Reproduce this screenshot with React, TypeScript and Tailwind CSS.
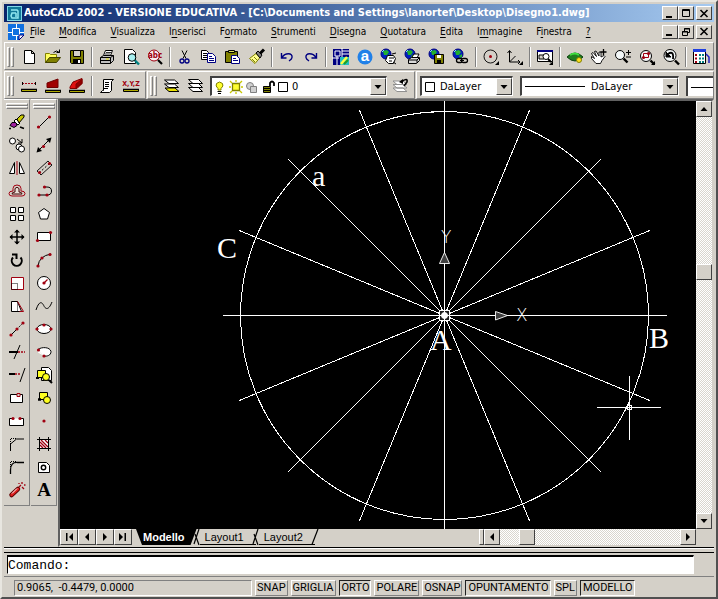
import React from "react";

type Icon = { name: string; art: React.ReactNode };

const RAISED =
  "flex shrink-0 items-center justify-center border border-t-white border-l-white border-r-[#404040] border-b-[#404040] bg-[#d4d0c8]";
const DITHER = "bg-[repeating-conic-gradient(#ffffff_0_25%,#d9d6ce_0_50%)] bg-[length:2px_2px]";
const UI = "font-['DejaVu_Sans_Condensed','DejaVu_Sans',sans-serif]";

const K = "#000";
const RED = "#a00010";
const NAVY = "#000080";
const OLIVE = "#808000";

function Svg({ children }: { children: React.ReactNode }) {
  return (
    <svg width="18" height="18" viewBox="0 0 18 18" fill="none" stroke={K} className="overflow-visible" aria-hidden="true">
      {children}
    </svg>
  );
}

const Corner = () => <path d="M17 13v4h-4z" fill={K} stroke="none" />;

const Globe = () => (
  <>
    <circle cx="6" cy="6" r="5" fill="#0020c0" stroke={NAVY} />
    <path d="M3 3l4-1 2 2-2 3H4zM7 8l3-2v3l-2 1z" fill="#20b030" stroke="none" />
    <path d="M2 4l2-2" stroke="#80e0ff" />
  </>
);

const Lens = ({ x = 7, y = 7, r = 5 }: { x?: number; y?: number; r?: number }) => (
  <>
    <circle cx={x} cy={y} r={r} fill="#f4f8f8" />
    <path d={`M${x + r - 1} ${y + r - 1}l4 4`} strokeWidth="2.4" />
  </>
);

const Dot = ({ x, y }: { x: number; y: number }) => (
  <circle cx={x} cy={y} r="1.6" fill={RED} stroke="none" />
);

const standardGroups: Icon[][] = [
  [
    { name: "Nuovo", art: <path d="M4.500 2.500h7l3 3v10h-10zM11.500 2.500v3h3" fill="#fff" /> },
    {
      name: "Apri",
      art: (
        <>
          <path d="M1.500 14.500v-9h4l1 1h6v3h-6z" fill="#ffff60" stroke={OLIVE} />
          <path d="M1.500 14.500l4-5h11l-4 5z" fill={OLIVE} stroke="#404000" />
          <path d="M9.500 4.500q3-3 6 0m0-3v3h-3" />
        </>
      ),
    },
    {
      name: "Salva",
      art: (
        <>
          <path d="M2.500 2.500h13v13h-12l-1-1z" fill={OLIVE} />
          <path d="M5.500 2.500h7v6h-7z" fill="#d4d0c8" />
          <path d="M5 11h8v5H5z" fill={K} stroke="none" />
          <path d="M10 12h2v3h-2z" fill="#fff" stroke="none" />
        </>
      ),
    },
  ],
  [
    {
      name: "Stampa",
      art: (
        <>
          <path d="M5.500 7.500l2-5h7l-2 5" fill="#fff" />
          <path d="M8 4.500h5M7 6h5" strokeWidth=".8" />
          <path d="M2.500 9.500l3-2h10v5l-3 3h-10z" fill="#c0c0c0" />
          <path d="M2.500 9.500h10v6M12.500 9.500l3-2M3 12.500h9" />
          <path d="M8 11h3" stroke="#e0e000" />
        </>
      ),
    },
    {
      name: "Anteprima di stampa",
      art: (
        <>
          <path d="M2.500 1.500h8l3 3v11h-11z" fill="#fff" />
          <circle cx="10" cy="9.500" r="3.800" fill="#a8f0f0" />
          <path d="M13 12.500l4 4" stroke="#008080" strokeWidth="2.400" />
        </>
      ),
    },
    {
      name: "Trova",
      art: (
        <>
          <circle cx="8" cy="7.500" r="5.500" fill="#f8f0f0" stroke={RED} />
          <path d="M12 12l4 4" stroke={K} strokeWidth="2.200" />
          <text x="2" y="10" fontSize="8" fontWeight="bold" fill={RED} stroke="none" fontFamily="DejaVu Sans Condensed">
            abc
          </text>
        </>
      ),
    },
  ],
  [
    {
      name: "Taglia",
      art: (
        <>
          <path d="M6 2.500l4 8M11 2.500l-4 8" />
          <circle cx="6" cy="13" r="2" stroke={NAVY} strokeWidth="1.300" />
          <circle cx="11" cy="13" r="2" stroke={NAVY} strokeWidth="1.300" />
        </>
      ),
    },
    {
      name: "Copia",
      art: (
        <>
          <path d="M1.500 2.500h5l2 2v7h-7z" fill="#fff" />
          <path d="M3 5.500h4M3 7.500h4M3 9.500h4" />
          <path d="M7.500 5.500h5l3 3v6h-8z" fill="#fff" stroke={NAVY} />
          <path d="M9 8.500h3M9 10.500h5M9 12.500h5" stroke={NAVY} />
        </>
      ),
    },
    {
      name: "Incolla",
      art: (
        <>
          <path d="M1.500 3.500h12v11h-12z" fill={OLIVE} />
          <path d="M4.500 2.500h6v2h-6z" fill="#e0e060" />
          <path d="M7.500 7.500h5l3 3v5h-8z" fill="#fff" stroke={NAVY} />
          <path d="M9 10.500h3M9 12.500h5" stroke={NAVY} />
        </>
      ),
    },
    {
      name: "Corrispondenza proprietà",
      art: (
        <>
          <path d="M1.500 10.500L8 5.500l4 4-5 6z" fill="#ffff90" stroke={OLIVE} />
          <path d="M4 11l3 3M6 9l3 3" stroke={OLIVE} />
          <path d="M8 5l2-2 4 4-2 3z" fill="#808080" />
          <path d="M12 5.500l4-4" strokeWidth="3" />
        </>
      ),
    },
  ],
  [
    {
      name: "Annulla",
      art: <path d="M3.500 5v5h5M4 9.500C7 4.500 15 4.500 14 9.500c0 1.500-1.500 2.500-3 3.500" stroke={NAVY} strokeWidth="1.400" />,
    },
    {
      name: "Ripristina",
      art: <path d="M14.500 5v5h-5M14 9.500C11 4.500 3 4.500 4 9.500c0 1.500 1.500 2.500 3 3.500" stroke={NAVY} strokeWidth="1.400" />,
    },
  ],
  [
    {
      name: "AutoCAD Oggi",
      art: (
        <>
          <path d="M1 1h16v16H1z" fill={NAVY} stroke="none" />
          <path d="M3 3h5v5H3zM0 10h7M10 3h7M10 6h7M10 0v10M5 8v9" stroke="#fff" />
          <path d="M8 9h9v8H8z" fill="#20c0c0" stroke="none" />
          <path d="M9 16l6-7" stroke="#ffff40" strokeWidth="2.500" />
          <path d="M12 16l4-4" stroke="#20a020" strokeWidth="2" />
        </>
      ),
    },
    {
      name: "Autodesk Point A",
      art: (
        <>
          <circle cx="9" cy="9" r="7.500" fill="#2080e8" stroke="none" />
          <text x="9" y="13" textAnchor="middle" fontSize="15" fontWeight="bold" fill="#fff" stroke="none" fontFamily="Liberation Sans">
            a
          </text>
        </>
      ),
    },
    {
      name: "Incontro",
      art: (
        <>
          <Globe />
          <path d="M7.500 7.500h6l2 3-2 5h-5l-3-3z" fill="#fff" />
          <path d="M9 10h5M13 14l3 2M12 6l4-1M9 13h3" />
        </>
      ),
    },
    {
      name: "Pubblica sul Web",
      art: (
        <>
          <Globe />
          <path d="M8 9l2-3h5l-2 4" fill="#fff" />
          <path d="M4.500 11.500l3-2h8v3l-3 3h-8z" fill="#d8d8d8" />
          <path d="M5 12h8v3M13 12l2-2" />
        </>
      ),
    },
    {
      name: "eTransmit",
      art: (
        <>
          <Globe />
          <path d="M6.500 6.500h9v9h-9z" fill={OLIVE} />
          <path d="M9 7h4v3H9z" fill="#fff" stroke="none" />
          <path d="M9 12h4v3H9z" fill={K} stroke="none" />
        </>
      ),
    },
    {
      name: "Collegamento ipertestuale",
      art: (
        <>
          <Globe />
          <rect x="4.500" y="10.500" width="6" height="4" rx="2" fill="#d4d0c8" strokeWidth="1.300" />
          <rect x="9.500" y="10.500" width="6" height="4" rx="2" fill="#d4d0c8" strokeWidth="1.300" />
          <path d="M8 12.500h4" />
        </>
      ),
    },
  ],
  [
    {
      name: "Snap a oggetto",
      art: (
        <>
          <circle cx="8.500" cy="8.500" r="6.500" strokeWidth=".9" />
          <circle cx="8.500" cy="8.500" r="1.500" fill={RED} stroke="none" />
          <Corner />
        </>
      ),
    },
    {
      name: "UCS",
      art: (
        <>
          <path d="M3.500 3v11H14M3.500 14l6-6M1.500 5l2-2.500 2 2.500M12 12l2 2-2 2" />
          <Corner />
        </>
      ),
    },
  ],
  [
    {
      name: "Viste",
      art: (
        <>
          <path d="M1.500 2.500h15v11h-15z" fill="#fff" />
          <path d="M1 2h16v2H1z" fill={NAVY} stroke="none" />
          <path d="M3 7h5v4H3z" fill="#d4d0c8" />
          <circle cx="10" cy="8.500" r="3" fill="#fff" />
          <path d="M12 11l3 3" strokeWidth="2" />
          <Corner />
        </>
      ),
    },
  ],
  [
    {
      name: "Orbita 3D",
      art: (
        <>
          <path d="M1 9q8-8 16 0-8 8-16 0z" fill="#208020" stroke="#104010" />
          <path d="M4 7q5-3 9 0" stroke="#40e040" strokeWidth="2" />
          <circle cx="13" cy="12" r="2.500" fill="#ffe020" stroke={OLIVE} />
        </>
      ),
    },
    {
      name: "Pan in tempo reale",
      art: (
        <>
          <path
            d="M1.500 8.500l3 2-3-5 1.500-1 3.500 4-2-5L6 3l3 5 0-4 2 0v5l3-1.500 1 1-3 4-1.500 3H6l-4.500-5z"
            fill="#fff"
            strokeWidth=".9"
          />
          <path d="M13.500 1v6M10.500 4h6" strokeWidth="1.300" />
        </>
      ),
    },
    {
      name: "Zoom in tempo reale",
      art: (
        <>
          <Lens x={6} y={7} r={4.5} />
          <path d="M14.500 2v5M12 4.500h5M12 9h5" />
        </>
      ),
    },
    {
      name: "Zoom finestra",
      art: (
        <>
          <Lens x={8} y={8} r={5.5} />
          <path d="M5.500 5.500h5v4h-5z" stroke={RED} />
          <Dot x={5.5} y={9.5} />
          <Dot x={10.5} y={5.5} />
          <Corner />
        </>
      ),
    },
    {
      name: "Zoom precedente",
      art: (
        <>
          <Lens x={8} y={7.5} r={6} />
          <path d="M4 9l0-5 5 5z" fill={K} />
          <path d="M6 6q6-4 5 5" strokeWidth="1.800" />
        </>
      ),
    },
  ],
  [
    {
      name: "Proprietà",
      art: (
        <>
          <path d="M1.500 1.500h12v14h-12z" fill="#fff" />
          <path d="M1 1h13v3H1z" fill="#2040e0" stroke="none" />
          <path d="M4 6v2M4 9.500v2M4 13v2" stroke={RED} strokeWidth="2" />
          <path d="M8 6v2M8 9.500v2M8 13v2M11 6v2M11 9.500v2M11 13v2" stroke="#008080" strokeWidth="2" />
          <path d="M14 6l3 3v6" stroke="#2020c0" strokeWidth="1.500" />
        </>
      ),
    },
  ],
];

const inquiryGroups: Icon[][] = [
  [
    {
      name: "Distanza",
      art: (
        <>
          <path d="M2 6.500h14" stroke={RED} strokeDasharray="2 1" />
          <path d="M2.500 5v3M15.500 5v3" />
          <path d="M1.500 12.500h15v2h-15z" fill="#e8e000" />
          <path d="M1 12.500h16" strokeWidth="1.500" />
        </>
      ),
    },
    {
      name: "Area",
      art: (
        <>
          <path d="M3 10.500V6l11-4v8.500z" fill="#a00000" stroke="#700000" />
          <path d="M1.500 13.500h15v2h-15z" fill="#e8e000" />
          <path d="M1 13.500h16" strokeWidth="1.500" />
        </>
      ),
    },
    {
      name: "Proprietà di massa",
      art: (
        <>
          <path d="M2 10l3-5 9-3.500v5l-5 5H2z" fill="#e01010" stroke="#800000" />
          <path d="M8 7l6-5v4.500l-6 4.500z" fill="#900000" stroke="#800000" />
          <path d="M1.500 13.500h15v2h-15z" fill="#e8e000" />
          <path d="M1 13.500h16" strokeWidth="1.500" />
        </>
      ),
    },
  ],
  [
    {
      name: "Lista",
      art: (
        <>
          <path d="M5.500 2.500h10l-2 2v9l-2 2h-9l2-2h1z" fill="#fff" />
          <path d="M7 5.500h4M7 7.500h4M7 9.500h4M6 11.500h4" />
        </>
      ),
    },
    {
      name: "Individua punto",
      art: (
        <>
          <text x="9" y="9" textAnchor="middle" fontSize="7" fontWeight="bold" fill={RED} stroke="none" fontFamily="DejaVu Sans Condensed">
            X,Y,Z
          </text>
          <path d="M1.500 12.500h15v2h-15z" fill="#e8e000" />
          <path d="M1 12.500h16" strokeWidth="1.500" />
        </>
      ),
    },
  ],
];

const layerIcons: Icon[] = [
  {
    name: "Layer dell'oggetto corrente",
    art: (
      <>
        <path d="M2 11h10l4 3.500H6z" fill="#e8e000" />
        <path d="M1.500 7h10l4 3.500H6z" fill="#fff" />
        <path d="M1.500 3h10l4 3.500H6z" fill="#fff" />
      </>
    ),
  },
  {
    name: "Layer",
    art: (
      <>
        <path d="M1.500 10.500h10l4 4H6z" fill="#fff" />
        <path d="M1.500 6.500h10l4 4H6z" fill="#fff" />
        <path d="M1.500 2.500h10l4 4H6z" fill="#fff" />
      </>
    ),
  },
];

const modifyTools: Icon[] = [
  {
    name: "Cancella",
    art: (
      <>
        <path d="M4 9.500h4l1 3-3 2-4-2z" fill="#a020a0" />
        <path d="M6 8l4 4 2-2-4-4z" fill="#fff" />
        <path d="M9 6l4-4h3v2l-5 6z" fill="#c8c800" />
        <path d="M1 15.500h2M12 14l4 1.500" strokeWidth="1.600" />
      </>
    ),
  },
  {
    name: "Copia oggetto",
    art: (
      <>
        <circle cx="4.500" cy="5" r="3" fill="#fff" />
        <circle cx="11" cy="11" r="3" fill="#fff" />
        <circle cx="13.500" cy="13" r="3" fill="#fff" />
        <path d="M9 3l5 4m0-4v4h-4" />
      </>
    ),
  },
  {
    name: "Specchio",
    art: (
      <>
        <path d="M6.500 3.500v11h-5z" fill="#fff" />
        <path d="M11.500 3.500v11h5z" fill="#fff" />
        <path d="M9 2v14" stroke={RED} />
      </>
    ),
  },
  {
    name: "Offset",
    art: (
      <>
        <path d="M5 9V6.500q0-3.500 4-3.500t4 3.500V9q4 0 4 2.500T14 14H4q-3 0-3-2.500T5 9z" stroke={RED} />
        <path d="M7 10V6.500q2-2.500 4 0V10q3 0 3 2H4q0-2 3-2z" stroke="#400000" fill="#e8e0d8" />
      </>
    ),
  },
  {
    name: "Serie",
    art: <path d="M2.500 2.500h5v5h-5zM10.500 2.500h5v5h-5zM2.500 10.500h5v5h-5zM10.500 10.500h5v5h-5z" fill="#fff" />,
  },
  {
    name: "Sposta",
    art: (
      <>
        <path d="M9 2v14M2 9h14" strokeWidth="1.500" />
        <path d="M6 4.500l3-3 3 3zM6 13.500l3 3 3-3zM4.500 6l-3 3 3 3zM13.500 6l3 3-3 3z" fill={K} stroke="none" />
      </>
    ),
  },
  {
    name: "Ruota",
    art: <path d="M5 6.500a5 5 0 1 0 7.500 0M4 3.500h4.500V8" strokeWidth="2" />,
  },
  {
    name: "Scala",
    art: (
      <>
        <path d="M3.500 3.500h12v12h-12z" fill="#fff" stroke={RED} />
        <path d="M3.500 9.500h6v6h-6z" strokeDasharray="1 1" />
      </>
    ),
  },
  {
    name: "Stira",
    art: (
      <>
        <path d="M3.500 4.500h6l4 10h-10z" fill="#fff" />
        <path d="M9.500 4.500v10" strokeDasharray="1 1" />
        <path d="M9.500 4.500l6 10h-4" stroke={RED} />
      </>
    ),
  },
  {
    name: "Allunga",
    art: (
      <>
        <path d="M3 15L9 9" />
        <path d="M9 9l6-6" strokeDasharray="1.500 1" />
        <Dot x={3} y={15} />
        <Dot x={9} y={9} />
        <Dot x={15} y={3} />
      </>
    ),
  },
  {
    name: "Taglia oggetto",
    art: (
      <>
        <path d="M12 2L6 16" />
        <path d="M1 9h9" strokeWidth="2" />
        <path d="M10 9h7" stroke={RED} strokeDasharray="2 1" strokeWidth="1.500" />
      </>
    ),
  },
  {
    name: "Estendi",
    art: (
      <>
        <path d="M17 2l-5 14" />
        <path d="M1 8h6" strokeWidth="2" />
        <path d="M7 8h6" stroke={RED} strokeDasharray="2 1" strokeWidth="1.500" />
      </>
    ),
  },
  {
    name: "Spezza nel punto",
    art: (
      <>
        <path d="M2.500 5.500h12v8h-12z" fill="#fff" />
        <path d="M9 4.500h3v3H9z" fill="#d4d0c8" stroke={RED} />
      </>
    ),
  },
  {
    name: "Spezza",
    art: (
      <>
        <path d="M5 6.500H1.500v7h14v-7H12" fill="#fff" />
        <Dot x={5} y={6.5} />
        <Dot x={12} y={6.5} />
      </>
    ),
  },
  {
    name: "Cima",
    art: (
      <>
        <path d="M2.500 16V9l6-5H16" />
        <path d="M2.500 9V3.500h6" strokeDasharray="1 1" />
      </>
    ),
  },
  {
    name: "Raccorda",
    art: (
      <>
        <path d="M2.500 16v-4q0-8 7-7.500H16" strokeWidth="1.300" />
        <path d="M2.500 9V3.500h6" strokeDasharray="1 1" />
      </>
    ),
  },
  {
    name: "Esplodi",
    art: (
      <>
        <path d="M3.500 14L10 8" stroke="#600000" strokeWidth="4.500" strokeLinecap="round" />
        <path d="M3.500 14L10 8" stroke="#e02020" strokeWidth="2.500" strokeLinecap="round" />
        <path d="M4 12.500l5-5" stroke="#fff" />
        <path d="M11 6l2-2M14 1v2M16 4h1.500M14 6l2 2M11 2v1" stroke={RED} strokeWidth="1.300" />
      </>
    ),
  },
];

const drawTools: Icon[] = [
  {
    name: "Linea",
    art: (
      <>
        <path d="M4 14L14 4" />
        <Dot x={3.5} y={14} />
        <Dot x={14.5} y={4} />
      </>
    ),
  },
  {
    name: "Linea di costruzione",
    art: (
      <>
        <path d="M3 15L15 3" />
        <path d="M1.500 16.500l1.500-5.500 4 4zM16.500 1.500L15 7l-4-4z" fill={K} stroke="none" />
        <Dot x={8.5} y={10.5} />
      </>
    ),
  },
  {
    name: "Multilinea",
    art: (
      <>
        <path d="M2 12L13 2M6 16l11-10M13 2l4 4M2 12l4 4" strokeWidth=".9" />
        <path d="M4 14L15 4" strokeDasharray="2 2" />
        <Dot x={4.5} y={13.5} />
        <Dot x={14.5} y={4.5} />
      </>
    ),
  },
  {
    name: "Polilinea",
    art: (
      <>
        <path d="M3 13h9q4.500 0 4.500-4T12 5H9.500" />
        <Dot x={4} y={13} />
        <Dot x={12} y={13} />
        <Dot x={9.5} y={5} />
      </>
    ),
  },
  { name: "Poligono", art: <path d="M9 3.500l5.500 4-2 6.500h-7l-2-6.500z" fill="#fff" /> },
  {
    name: "Rettangolo",
    art: (
      <>
        <path d="M2.500 4.500h13v8h-13z" fill="#fff" />
        <Dot x={2.5} y={12.5} />
        <Dot x={15.5} y={4.5} />
      </>
    ),
  },
  {
    name: "Arco",
    art: (
      <>
        <path d="M3 15Q4 5 16 3" />
        <Dot x={3} y={15} />
        <Dot x={7} y={7} />
        <Dot x={15} y={3.5} />
      </>
    ),
  },
  {
    name: "Cerchio",
    art: (
      <>
        <circle cx="9" cy="9" r="6.500" fill="#fff" />
        <path d="M9 9l3.500-3.500" stroke={RED} strokeWidth="1.300" />
        <Dot x={9} y={9} />
      </>
    ),
  },
  { name: "Spline", art: <path d="M1 13C5 1 8 7 9 9s4 6 8-4" /> },
  {
    name: "Ellisse",
    art: (
      <>
        <ellipse cx="9" cy="9" rx="7" ry="4.500" fill="#fff" />
        <Dot x={2} y={9} />
        <Dot x={16} y={9} />
        <Dot x={9} y={5} />
      </>
    ),
  },
  {
    name: "Arco ellittico",
    art: (
      <>
        <path d="M3 6.500C7 3.500 15 4 16 8.500c0 4-4 5-7 4.500" fill="#fff" />
        <path d="M3 6.500v3l6 3.500" fill="#fff" stroke="none" />
        <Dot x={3.5} y={7} />
        <Dot x={9} y={13} />
      </>
    ),
  },
  {
    name: "Inserisci blocco",
    art: (
      <>
        <path d="M6.500 1.500h7l3 3v10h-10z" fill="#fff" />
        <path d="M2.500 4.500h8v7h-8z" fill="#ffff20" />
        <circle cx="11" cy="11" r="3.500" fill="#ffff20" />
        <path d="M1 12h3M14 14l3 3" strokeWidth="2" />
      </>
    ),
  },
  {
    name: "Crea blocco",
    art: (
      <>
        <path d="M4.500 3.500h8v7h-8z" fill="#ffff20" />
        <circle cx="12" cy="11" r="3.500" fill="#ffff20" />
        <path d="M3 10.500h3" strokeWidth="2.500" />
      </>
    ),
  },
  { name: "Punto", art: <Dot x={9} y={9} /> },
  {
    name: "Tratteggio",
    art: (
      <>
        <path d="M4.500 4.500h9v9h-9z" fill="#fff" />
        <path d="M5 10l3 3M5 7l6 6M6 5l7 7M10 5l3 3" stroke={RED} strokeWidth="1.300" />
        <path d="M2 4.500h14M2 13.500h14M4.500 2v14M13.500 2v14" />
      </>
    ),
  },
  {
    name: "Regione",
    art: (
      <>
        <path d="M3.500 4.500h8l3 3v7h-11z" fill="#fff" />
        <circle cx="8.500" cy="9.500" r="2.200" strokeWidth="1.400" />
      </>
    ),
  },
  {
    name: "Testo multilinea",
    art: (
      <text x="9" y="15" textAnchor="middle" fontSize="19" fontWeight="bold" fill={K} stroke="none" fontFamily="Liberation Serif">
        A
      </text>
    ),
  },
];

function Grip() {
  return (
    <div className="mr-[3px] flex shrink-0 gap-px self-stretch py-0.5">
      <i className="w-[3px] border border-t-white border-r-[#808080] border-b-[#808080] border-l-white" />
      <i className="w-[3px] border border-t-white border-r-[#808080] border-b-[#808080] border-l-white" />
    </div>
  );
}

function Divider() {
  return <div className="mx-0.5 h-5 w-0.5 shrink-0 border-r border-l border-r-white border-l-[#808080]" />;
}

function Tool({ icon }: { icon: Icon }) {
  return (
    <button type="button" aria-label={icon.name} className="flex h-6 w-6 shrink-0 items-center justify-center">
      <Svg>{icon.art}</Svg>
    </button>
  );
}

function Groups({ groups }: { groups: Icon[][] }) {
  return (
    <>
      {groups.map((g, i) => (
        <React.Fragment key={i}>
          {i > 0 && <Divider />}
          {g.map((icon) => (
            <Tool key={icon.name} icon={icon} />
          ))}
        </React.Fragment>
      ))}
    </>
  );
}

const BAR = "flex items-center border border-t-white border-l-white border-r-[#808080] border-b-[#808080] pt-0.5 pl-0.5";

function Combo({ label, value, className, children }: { label: string; value: string; className: string; children?: React.ReactNode }) {
  return (
    <div
      className={`flex h-5 items-center border-t-2 border-l-2 border-r border-b border-t-[#404040] border-l-[#404040] border-r-white border-b-white bg-white ${className}`}
    >
      {children}
      <select aria-label={label} className={`min-w-0 flex-1 appearance-none bg-transparent text-[11px] leading-4 outline-none ${UI}`}>
        <option>{value}</option>
      </select>
      <span className={`h-full w-4 ${RAISED}`}>
        <Arrow dir="down" />
      </span>
    </div>
  );
}

function Arrow({ dir }: { dir: "up" | "down" | "left" | "right" | "first" | "last" }) {
  const d = {
    up: "M0.500 6h7L4 2z",
    down: "M0.500 2h7L4 6z",
    left: "M6 0v8L2 4z",
    right: "M2 0v8l4-4z",
    first: "M8 0v8L4 4zM1 0h1.500v8H1z",
    last: "M0 0v8l4-4zM5.500 0H7v8H5.500z",
  }[dir];
  return (
    <svg width="8" height="8" viewBox="0 0 8 8" aria-hidden="true">
      <path d={d} fill={K} />
    </svg>
  );
}

function WindowButtons({ restore }: { restore: boolean }) {
  const btn = `h-3.5 w-4 ${RAISED}`;
  return (
    <div className="ml-auto flex pr-0.5">
      <button type="button" aria-label="Riduci a icona" className={btn}>
        <svg width="10" height="9"><path d="M1 7h6v2H1z" /></svg>
      </button>
      <button type="button" aria-label={restore ? "Ripristina" : "Ingrandisci"} className={btn}>
        <svg width="10" height="10" fill="none" stroke={K}>
          {restore ? (
            <path d="M3.500 4V1.500h5v4H7M3 2h6M1.500 4.500h5v4h-5zM1 5h6" />
          ) : (
            <path d="M1.500 1.500h7v7h-7zM1 2.500h8" />
          )}
        </svg>
      </button>
      <button type="button" aria-label="Chiudi" className={`ml-0.5 ${btn}`}>
        <svg width="10" height="9" stroke={K} strokeWidth="1.600"><path d="M1.500 1l7 7M8.500 1l-7 7" /></svg>
      </button>
    </div>
  );
}

const menus: [string, string, string][] = [
  ["", "F", "ile"],
  ["", "M", "odifica"],
  ["", "V", "isualizza"],
  ["I", "n", "serisci"],
  ["F", "o", "rmato"],
  ["", "S", "trumenti"],
  ["", "D", "isegna"],
  ["", "Q", "uotatura"],
  ["", "E", "dita"],
  ["I", "m", "magine"],
  ["F", "i", "nestra"],
  ["", "?", ""],
];

function Palette({ tools }: { tools: Icon[] }) {
  return (
    <div className="flex w-[26px] flex-col items-center border-t border-r border-b border-t-white border-r-[#808080] border-b-[#808080] pt-[3px] pb-1">
      <i className="h-[3px] w-[22px] border border-t-white border-l-white border-r-[#808080] border-b-[#808080]" />
      <i className="mb-px h-[3px] w-[22px] border border-t-white border-l-white border-r-[#808080] border-b-[#808080]" />
      {tools.map((t) => (
        <button key={t.name} type="button" aria-label={t.name} className="flex h-[23px] w-6 items-center justify-center">
          <Svg>{t.art}</Svg>
        </button>
      ))}
    </div>
  );
}

const CX = 384.5;
const CY = 214.5;
const spokes = Array.from({ length: 8 }, (_, i) => {
  const a = (i * Math.PI) / 8;
  return { x: Math.cos(a) * 222, y: Math.sin(a) * 222 };
});

function Drawing() {
  return (
    <svg
      className="absolute inset-0 h-full w-full"
      viewBox="0 0 636 428"
      preserveAspectRatio="xMidYMid slice"
      fill="none"
      stroke="#fff"
      role="img"
      aria-label="Disegno1"
    >
      <g shapeRendering="crispEdges">
        <circle cx={CX} cy={CY} r="204" />
        {spokes.map((s, i) => (
          <path key={i} d={`M${CX - s.x} ${CY - s.y}L${CX + s.x} ${CY + s.y}`} />
        ))}
        <path d="M379.500 209.500h10v10h-10z" fill="#202020" />
        <path d="M379 214.500h11M384.500 209v11" />
        <path d="M537 306.500h64M569.500 275v64M567.500 304.500h4v4h-4z" />
      </g>
      <circle cx={CX} cy={CY} r="3" fill="#fff" />
      <path d="M384.500 151.500l5 11h-10zM435.500 210.500l12 4-12 4.500z" fill="#404040" strokeWidth=".9" />
      <g fill="#fff" stroke="none" className="font-['Liberation_Serif',serif] text-[30px]">
        <text x="370" y="249">A</text>
        <text x="589" y="247">B</text>
        <text x="157" y="157">C</text>
        <text x="252" y="85">a</text>
      </g>
      <g fill="#fff" stroke="none" className="font-['DejaVu_Sans_Light','DejaVu_Sans',sans-serif] text-[17px] font-extralight">
        <text x="381" y="142">Y</text>
        <text x="456" y="220">X</text>
      </g>
    </svg>
  );
}

const modes = [
  { name: "SNAP", on: false },
  { name: "GRIGLIA", on: false },
  { name: "ORTO", on: true },
  { name: "POLARE", on: false },
  { name: "OSNAP", on: false },
  { name: "OPUNTAMENTO", on: true },
  { name: "SPL", on: false },
  { name: "MODELLO", on: true },
];

export default function App() {
  return (
    <div className="flex h-screen min-h-[560px] flex-col overflow-hidden border-2 border-t-[#e8e6e0] border-r-[#505050] border-b-[#505050] border-l-[#e8e6e0] bg-[#d4d0c8] px-0.5 pt-0.5 text-black">
      <header className="flex h-[18px] shrink-0 items-center bg-linear-to-r from-[#0a246a] to-[#a6caf0] pl-[3px]">
        <svg width="15" height="15" viewBox="0 0 15 15" className="shrink-0" aria-hidden="true">
          <path d="M0 0h15v15H0z" fill="#80d8e8" />
          <path d="M1 1h13v13H1z" fill="#107898" />
          <path d="M4 4h6l1 1v7H5l-1-2 1-3h4M9 7v4" fill="none" stroke="#90e8f0" strokeWidth="1.500" />
        </svg>
        <h1 className={`ml-0.5 truncate text-[11px] leading-4 font-bold text-white ${UI}`}>
          AutoCAD 2002 - VERSIONE EDUCATIVA - [C:\Documents and Settings\lanortef\Desktop\Disegno1.dwg]
        </h1>
        <WindowButtons restore={false} />
      </header>

      <nav className="flex h-[19px] shrink-0 items-center pl-1">
        <svg width="16" height="16" viewBox="0 0 16 16" className="shrink-0" aria-hidden="true">
          <path d="M0 0h16v11l-5 5H0z" fill="#1070e0" />
          <path d="M4.500 4.500h7v7h-7zM0 8.500h4.500M11.500 8.500H16M8.500 0v4.500M8.500 11.500V16" fill="none" stroke="#fff" />
          <path d="M11 16v-5h5z" fill="#fff" stroke={NAVY} />
        </svg>
        {menus.map(([a, b, c]) => (
          <button key={a + b + c} type="button" className={`pr-2 pl-1.5 text-[10px] leading-4 ${UI}`}>
            {a}
            <u className="underline-offset-2">{b}</u>
            {c}
          </button>
        ))}
        <WindowButtons restore />
      </nav>

      <div className={`mt-px h-7 shrink-0 overflow-hidden ${BAR}`}>
        <Grip />
        <Groups groups={standardGroups} />
      </div>

      <div className="mt-px flex h-7 shrink-0 gap-px overflow-hidden">
        <div className={`w-[142px] shrink-0 ${BAR}`}>
          <Grip />
          <Groups groups={inquiryGroups} />
        </div>
        <div className={`w-[268px] shrink-0 ${BAR}`}>
          <Grip />
          {layerIcons.map((i) => (
            <Tool key={i.name} icon={i} />
          ))}
          <Combo label="Layer" value="0" className="ml-0.5 w-[177px]">
            <svg width="80" height="16" viewBox="0 0 80 16" className="shrink-0" fill="none" stroke={K} aria-hidden="true">
              <path d="M6 9.500Q3 7 4.500 4.500q3-3 6 0Q12 7 9 9.500V11H6z" fill="#ffff30" stroke={OLIVE} />
              <path d="M5.500 12.500h4M6 14.500h3" />
              <path d="M20.500 4.500h7v7h-7z" fill="#ffff30" stroke={OLIVE} strokeWidth="1.300" />
              <path d="M18 2l2 2M30 2l-2 2M18 14l2-2M30 14l-2-2M17 8h2M29 8h2M24 1v2M24 13v2" stroke="#c8c800" strokeWidth="1.300" />
              <circle cx="38" cy="7" r="3.500" fill="#d0d0d0" stroke="#808080" />
              <path d="M38.500 7.500h6v6h-6z" fill="#d0d0d0" stroke="#808080" />
              <path d="M51.500 7.500h7v6h-7z" fill={OLIVE} />
              <path d="M51 9.500h8M51 11.500h8" />
              <path d="M58 7V4q2-3 4 0v3" strokeWidth="1.800" />
              <path d="M66.500 3.500h9v9h-9z" fill="#fff" />
            </svg>
          </Combo>
          <div className="ml-0.5">
            <Tool
              icon={{
                name: "Layer precedente",
                art: (
                  <>
                    <path d="M1 11h10l4 3.500H5zM1 7.500h10l4 3.500H5zM1 4h10l4 3.500H5z" fill="#fff" stroke="#909090" />
                    <path d="M7 5l4-3v5z" fill={K} stroke="none" />
                    <path d="M9 5q7-5 6 0l-3 4" strokeWidth="1.600" />
                  </>
                ),
              }}
            />
          </div>
        </div>
        <div className={`min-w-0 flex-1 ${BAR}`}>
          <Combo label="Colore" value="DaLayer" className="ml-px w-[93px] shrink-0">
            <svg width="18" height="12" className="shrink-0" fill="#fff" stroke={K} aria-hidden="true">
              <path d="M3.500 1.500h9v9h-9z" />
            </svg>
          </Combo>
          <div className="w-[7px] shrink-0" />
          <Combo label="Tipo di linea" value="DaLayer" className="w-[159px] shrink-0">
            <i className="mr-1.5 ml-[3px] h-px w-[60px] shrink-0 bg-black" />
          </Combo>
          <div className="w-[7px] shrink-0" />
          <div className="flex h-5 min-w-0 flex-1 items-center border-t-2 border-l-2 border-t-[#404040] border-l-[#404040] bg-white">
            <i className="ml-[3px] h-px flex-1 bg-black" />
          </div>
        </div>
      </div>

      <div className="flex min-h-0 flex-1">
        <aside className="flex w-[54px] shrink-0 items-start gap-px">
          <Palette tools={modifyTools} />
          <Palette tools={drawTools} />
        </aside>
        <main className="flex min-w-0 flex-1 flex-col border-2 border-t-[#606060] border-r-[#d4d0c8] border-b-[#d4d0c8] border-l-[#606060]">
          <div className="flex min-h-0 flex-1">
            <div className="relative flex-1 bg-black">
              <Drawing />
            </div>
            <div className={`flex w-4 shrink-0 flex-col ${DITHER}`}>
              <button type="button" aria-label="Su" className={`h-4 w-4 ${RAISED}`}>
                <Arrow dir="up" />
              </button>
              <div className="flex flex-1 flex-col">
                <div className="flex-[147]" />
                <div className={`h-4 w-4 ${RAISED}`} />
                <div className="flex-[233]" />
              </div>
              <button type="button" aria-label="Giù" className={`h-4 w-4 ${RAISED}`}>
                <Arrow dir="down" />
              </button>
            </div>
          </div>
          <div className="flex h-4 shrink-0">
            {(["first", "left", "right", "last"] as const).map((d) => (
              <button key={d} type="button" aria-label={d} className={`h-4 w-[18px] ${RAISED}`}>
                <Arrow dir={d} />
              </button>
            ))}
            <div className="ml-1 flex flex-1 font-['Liberation_Sans',Arial,sans-serif] text-[11px] leading-4">
              <button type="button" className="bg-black pr-3 pl-[7px] font-bold text-white [clip-path:polygon(0_0,100%_0,calc(100%-6px)_100%,6px_100%)]">
                Modello
              </button>
              {["Layout1", "Layout2"].map((t) => (
                <React.Fragment key={t}>
                  <svg width="7" height="16" fill="none" stroke={K} className="-ml-1 shrink-0" aria-hidden="true">
                    <path d="M6 0L1 15M2 5l4 11" strokeWidth="1.200" />
                  </svg>
                  <button type="button" className="border-b border-black pr-3 pl-[5px] leading-4">
                    {t}
                  </button>
                </React.Fragment>
              ))}
              <svg width="8" height="16" fill="none" stroke={K} className="-ml-1 shrink-0" aria-hidden="true">
                <path d="M7 0L1 15.500" strokeWidth="1.200" />
              </svg>
            </div>
            <div className={`flex w-[217px] shrink-0 ${DITHER}`}>
              <div className={`h-4 w-[5px] ${RAISED}`} />
              <button type="button" aria-label="Sinistra" className={`h-4 w-4 ${RAISED}`}>
                <Arrow dir="left" />
              </button>
              <div className={`ml-[19px] h-4 w-4 ${RAISED}`} />
              <button type="button" aria-label="Destra" className={`ml-auto h-4 w-4 ${RAISED}`}>
                <Arrow dir="right" />
              </button>
            </div>
            <div className="w-4 shrink-0" />
          </div>
        </main>
      </div>

      <div className="h-1.5 shrink-0 border-t border-b border-black bg-[#d4d0c8] shadow-[inset_0_1px_#fff]" />
      <div className="mt-0.5 mr-5 mb-0.5 ml-[3px] h-[19px] shrink-0 border-t-2 border-l border-r border-b border-t-black border-r-white border-b-white border-l-black bg-white">
        <label className="flex h-full items-center pt-0.5 font-['Liberation_Mono','Courier_New',monospace] text-[13px] leading-4">
          Comando:
          <input aria-label="Comando" className="min-w-0 flex-1 bg-transparent outline-none" />
        </label>
      </div>

      <footer className="flex h-[21px] shrink-0 items-start gap-[3px] border-t border-[#808080] pt-[3px] pl-2.5 font-[Roboto,sans-serif] text-[11px]">
        <output className="h-4 w-[238px] shrink-0 border border-t-[#808080] border-r-white border-b-white border-l-[#808080] pl-0.5 leading-[14px] whitespace-pre">
          0.9065,  -0.4479, 0.0000
        </output>
        {modes.map((m) => (
          <button
            key={m.name}
            type="button"
            aria-pressed={m.on}
            className={
              m.on
                ? "h-4 shrink-0 border border-t-[#202020] border-r-white border-b-white border-l-[#202020] pr-px pl-0.5 leading-[14px]"
                : "h-4 shrink-0 border border-t-white border-r-[#808080] border-b-[#808080] border-l-white px-px leading-[14px]"
            }
          >
            {m.name}
          </button>
        ))}
      </footer>
    </div>
  );
}
